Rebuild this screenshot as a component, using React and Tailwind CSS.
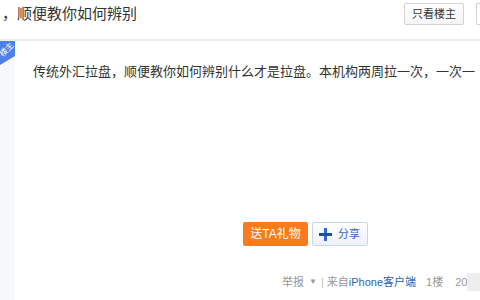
import React from "react";

const font = { fontFamily: '"Liberation Sans", "Noto Sans CJK SC", sans-serif' };

function PlusIcon() {
  return (
    <svg width="13" height="13" viewBox="0 0 13 13">
      <rect x="5" y="0" width="3" height="13" fill="#2b6dd1" />
      <rect x="0" y="5" width="13" height="3" fill="#1f4f9e" />
    </svg>
  );
}

function App() {
  return (
    <div className="w-[480px] h-[300px] bg-white overflow-hidden flex flex-col" style={font}>
      <div className="h-[41px] shrink-0 border-b-2 border-[#ececec] flex items-start">
        <div className="ml-[2px] mt-[4px] text-[15px] leading-[20px] text-[#333] whitespace-nowrap">
          ，顺便教你如何辨别
        </div>
        <div className="flex-1" />
        <div className="mt-[3px] h-[22px] px-[7px] flex items-center border border-[#d3d3d3] rounded-[2px] bg-gradient-to-b from-white to-[#f5f5f5] text-[11px] text-[#333]">
          只看楼主
        </div>
        <div className="mt-[3px] ml-[12px] h-[22px] w-[4px] shrink-0 border-l border-y border-[#d3d3d3] rounded-l-[2px]" />
      </div>

      <div className="flex flex-1">
        <div className="w-[15px] shrink-0 bg-[#f7f8fb] relative">
          <div
            className="absolute left-0 top-0 w-[15px] h-[24px] bg-[#4f7fe8] flex items-center justify-center overflow-hidden"
            style={{ clipPath: "polygon(0 0, 100% 0, 100% 62%, 0 100%)" }}
          >
            <span className="text-[8px] leading-[8px] text-white -rotate-45 -mt-[7px] -ml-[1px] whitespace-nowrap">楼主</span>
          </div>
        </div>
        <div className="flex-1 flex flex-col min-w-0">
          <div className="mt-[21px] ml-[18px] text-[13px] leading-[20px] text-[#333] whitespace-nowrap">
            传统外汇拉盘，顺便教你如何辨别什么才是拉盘。本机构两周拉一次，一次一
          </div>
          <div className="mt-[140px] ml-[228px] flex gap-[4px]">
            <div className="w-[65px] h-[24px] bg-[#fa7a1e] rounded-[2px] flex items-center justify-center text-[12px] text-white">
              送TA礼物
            </div>
            <div className="w-[56px] h-[24px] border border-[#c9d6e8] rounded-[2px] bg-gradient-to-b from-white to-[#edf2f9] flex items-center pl-[6px] gap-[6px] text-[11px] text-[#3a67ae]">
              <PlusIcon />
              <span>分享</span>
            </div>
          </div>
          <div className="mt-[28px] ml-[267px] flex items-center h-[16px] text-[11px] text-[#999] whitespace-nowrap">
            <span>举报</span>
            <span className="ml-[5px] text-[8px]">▼</span>
            <span className="ml-[4px] text-[#bbb]">|</span>
            <span className="ml-[3px]">来自</span>
            <span className="text-[#2d64b3]">iPhone客户端</span>
            <span className="ml-[10px]">1楼</span>
            <span className="ml-[12px]">20</span>
            <span className="w-[14px] h-[18px] bg-[#ededed] shrink-0" />
          </div>
        </div>
      </div>
    </div>
  );
}

export default App;
